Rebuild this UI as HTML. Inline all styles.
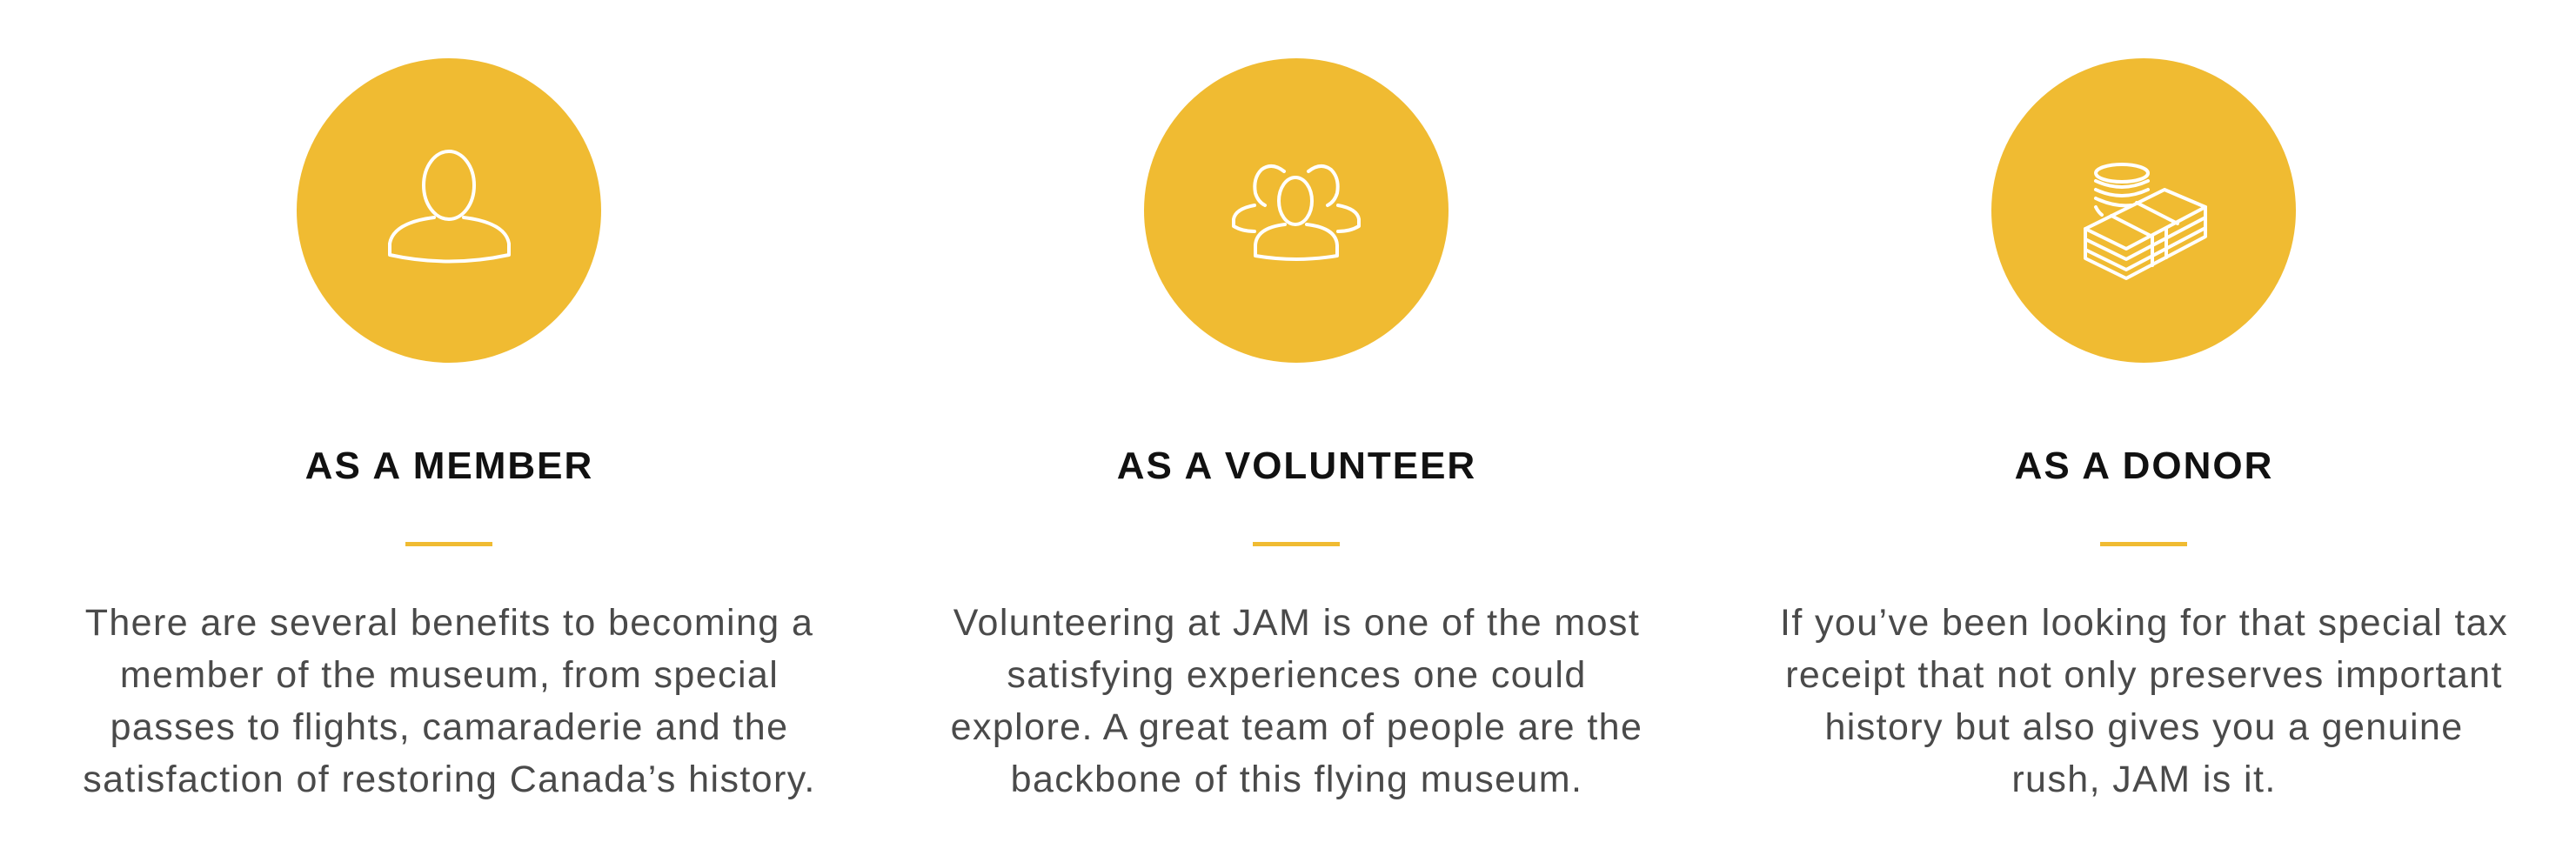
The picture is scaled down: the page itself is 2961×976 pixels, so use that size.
<!DOCTYPE html>
<html><head><meta charset="utf-8"><style>
html,body{margin:0;padding:0;background:#fff;width:2961px;height:976px;overflow:hidden;position:relative}
.col{position:absolute;width:975px;text-align:center;font-family:"Liberation Sans",sans-serif}
h2{position:absolute;top:511px;left:0;width:100%;margin:0;font-size:44px;line-height:50px;font-weight:bold;letter-spacing:2px;color:#111}
.bar{position:absolute;top:623px;left:437px;width:100px;height:5px;background:#f0bb32}
p{position:absolute;top:686px;left:-20px;width:1015px;margin:0;font-size:43px;line-height:60px;letter-spacing:1.4px;color:#4a4a4a}
svg{position:absolute;left:0;top:0}
</style></head><body>
<svg width="2961" height="976" viewBox="0 0 2961 976">
<g fill="#f0bb32"><circle cx="516" cy="242" r="175"/><circle cx="1490" cy="242" r="175"/><circle cx="2464" cy="242" r="175"/></g>
<g fill="none" stroke="#fff" stroke-width="4" stroke-linecap="round" stroke-linejoin="round">
<ellipse cx="516" cy="213" rx="29" ry="39"/>
<path d="M499 250 Q452 256 448 280 L448 293 Q516 308 585 293 L585 280 Q581 256 533 250"/>
<ellipse cx="1489" cy="231" rx="19" ry="27"/>
<path d="M1477 258 Q1444 262 1443 282 L1443 294 Q1490 302 1537 294 L1537 282 Q1536 262 1502 258"/>
<path d="M1476 197 Q1462 186 1450 195 Q1440 205 1443 222 Q1446 232 1454 236"/>
<path d="M1442 236 Q1420 240 1418 252 L1418 260 Q1428 266 1442 266"/>
<path d="M1504 197 Q1518 186 1530 195 Q1540 205 1537 222 Q1534 232 1526 236"/>
<path d="M1538 236 Q1560 240 1562 252 L1562 260 Q1552 266 1538 266"/>
<ellipse cx="2439" cy="199" rx="30" ry="10"/>
<path d="M2409 208 Q2439 222 2469 208 M2409 218 Q2439 232 2469 218 M2409 228 Q2430 238 2450 236 M2409 238 Q2412 244 2416 247"/>
<path d="M2397 263 L2488 218 L2535 238 L2444 286 Z"/>
<path d="M2427 248 L2474 272 M2456 233 L2503 257"/>
<path d="M2397 263 L2397 275 L2444 298 L2535 250 L2535 238"/>
<path d="M2397 275 L2397 287 L2444 310 L2535 262 L2535 250"/>
<path d="M2397 287 L2397 297 L2444 320 L2535 272 L2535 262"/>
<path d="M2474 272 L2474 305 M2490 262 L2490 296"/>
</g>
</svg>
<div class="col" style="left:29px"><h2>AS A MEMBER</h2><div class="bar"></div><p>There are several benefits to becoming a<br>member of the museum, from special<br>passes to flights, camaraderie and the<br>satisfaction of restoring Canada’s history.</p></div>
<div class="col" style="left:1003px"><h2>AS A VOLUNTEER</h2><div class="bar"></div><p>Volunteering at JAM is one of the most<br>satisfying experiences one could<br>explore. A great team of people are the<br>backbone of this flying museum.</p></div>
<div class="col" style="left:1977px"><h2>AS A DONOR</h2><div class="bar"></div><p>If you’ve been looking for that special tax<br>receipt that not only preserves important<br>history but also gives you a genuine<br>rush, JAM is it.</p></div>
</body></html>
